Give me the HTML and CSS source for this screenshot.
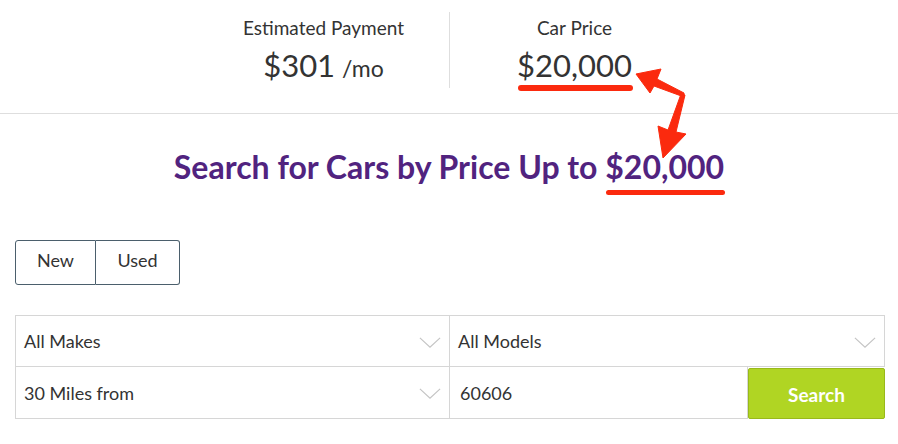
FILE: index.html
```html
<!DOCTYPE html>
<html>
<head>
<meta charset="utf-8">
<link rel="stylesheet" href="styles.css">
</head>
<body>
<div class="page">
  <section class="summary">
    <div class="stat">
      <div class="stat-label">Estimated Payment</div>
      <div class="stat-value">$301<span class="unit">/mo</span></div>
    </div>
    <div class="stat stat-right">
      <div class="stat-label">Car Price</div>
      <div class="stat-value"><span class="marked">$20,000</span></div>
    </div>
  </section>
  <section class="search">
    <h1 class="title">Search for Cars by Price Up to <span class="marked marked-h">$20,000</span></h1>
    <div class="toggle">
      <button class="tbtn">New</button>
      <button class="tbtn">Used</button>
    </div>
    <div class="grid">
      <div class="field select">All Makes<svg class="chev" viewBox="0 0 24 12"><path d="M1 1 L12 11 L23 1" fill="none" stroke="#c4c4c4" stroke-width="1.3"/></svg></div>
      <div class="field select">All Models<svg class="chev" viewBox="0 0 24 12"><path d="M1 1 L12 11 L23 1" fill="none" stroke="#c4c4c4" stroke-width="1.3"/></svg></div>
      <div class="field select">30 Miles from<svg class="chev" viewBox="0 0 24 12"><path d="M1 1 L12 11 L23 1" fill="none" stroke="#c4c4c4" stroke-width="1.3"/></svg></div>
      <div class="zip-row">
        <div class="field zip">60606</div>
        <button class="go">Search</button>
      </div>
    </div>
  </section>
  <svg class="arrows" viewBox="0 0 898 444" width="898" height="444">
    <path d="M684 93 L657 79 L661 69 L636 74 L650 93 L654 86 L684 97 Z" fill="#fb2a0e" stroke="#fb2a0e" stroke-width="1" stroke-linejoin="round"/>
    <path d="M681 94 L668 130 L658 126 L663 158 L686 134 L676 132 L685 95 Z" fill="#fb2a0e" stroke="#fb2a0e" stroke-width="1" stroke-linejoin="round"/>
  </svg>
</div>
</body>
</html>
```
FILE: styles.css
```css
html, body {
  margin: 0;
  padding: 0;
  background: #fff;
}
.page {
  position: relative;
  width: 898px;
  height: 444px;
  overflow: hidden;
  font-family: "Lato", "Open Sans", sans-serif;
  color: #333;
}
.summary {
  display: flex;
  justify-content: center;
  padding-top: 12px;
  height: 114px;
  box-sizing: border-box;
  border-bottom: 1px solid #dedede;
}
.stat {
  width: 250px;
  height: 76px;
  text-align: center;
}
.stat-right {
  border-left: 1px solid #dedede;
}
.stat-label {
  font-size: 19px;
  line-height: 22px;
  padding-top: 5px;
}
.stat-value {
  font-size: 31px;
  line-height: 38px;
  margin-top: 7px;
}
.unit {
  font-size: 23px;
  margin-left: 7px;
}
.marked {
  position: relative;
  display: inline-block;
}
.marked::after {
  content: "";
  position: absolute;
  left: 1px;
  right: -1px;
  bottom: -7px;
  height: 6px;
  border-radius: 3px;
  background: #fb2a0e;
}
.marked-h::after {
  bottom: -8px;
  height: 5px;
}
.search {
  padding: 0 15px;
}
.title {
  margin: 33px 0 0;
  text-align: center;
  font-size: 32px;
  line-height: 40px;
  font-weight: 700;
  color: #51237f;
}
.toggle {
  display: flex;
  margin-top: 53px;
}
.tbtn {
  font-family: inherit;
  font-size: 18px;
  color: #333;
  background: #fff;
  border: 1px solid #4b5f6c;
  height: 45px;
  padding: 0 0 5px;
}
.tbtn:first-child {
  width: 81px;
  border-radius: 3px 0 0 3px;
}
.tbtn:last-child {
  width: 84px;
  border-left: none;
  border-radius: 0 3px 3px 0;
}
.grid {
  display: grid;
  grid-template-columns: 435px 435px;
  grid-auto-rows: 52px;
  margin-top: 30px;
}
.field {
  box-sizing: border-box;
  border: 1px solid #d6d6d6;
  display: flex;
  align-items: center;
  padding: 0 8px;
  font-size: 18px;
  color: #333;
  position: relative;
}
.grid > .field:nth-child(2) {
  border-left: none;
}
.grid > .field:nth-child(3) {
  border-top: none;
}
.chev {
  position: absolute;
  right: 8px;
  top: 21px;
  width: 22px;
  height: 11px;
}
.zip-row {
  display: flex;
}
.zip {
  flex: 1;
  border-left: none;
  border-top: none;
  padding-left: 10px;
}
.go {
  width: 137px;
  height: 51px;
  margin-top: 1px;
  box-sizing: border-box;
  background: #b0d523;
  border: 1px solid #99b91a;
  border-radius: 2px;
  color: #fff;
  font-family: inherit;
  font-size: 19px;
  font-weight: 700;
  padding-top: 2px;
}
.arrows {
  position: absolute;
  left: 0;
  top: 0;
  pointer-events: none;
}
```
